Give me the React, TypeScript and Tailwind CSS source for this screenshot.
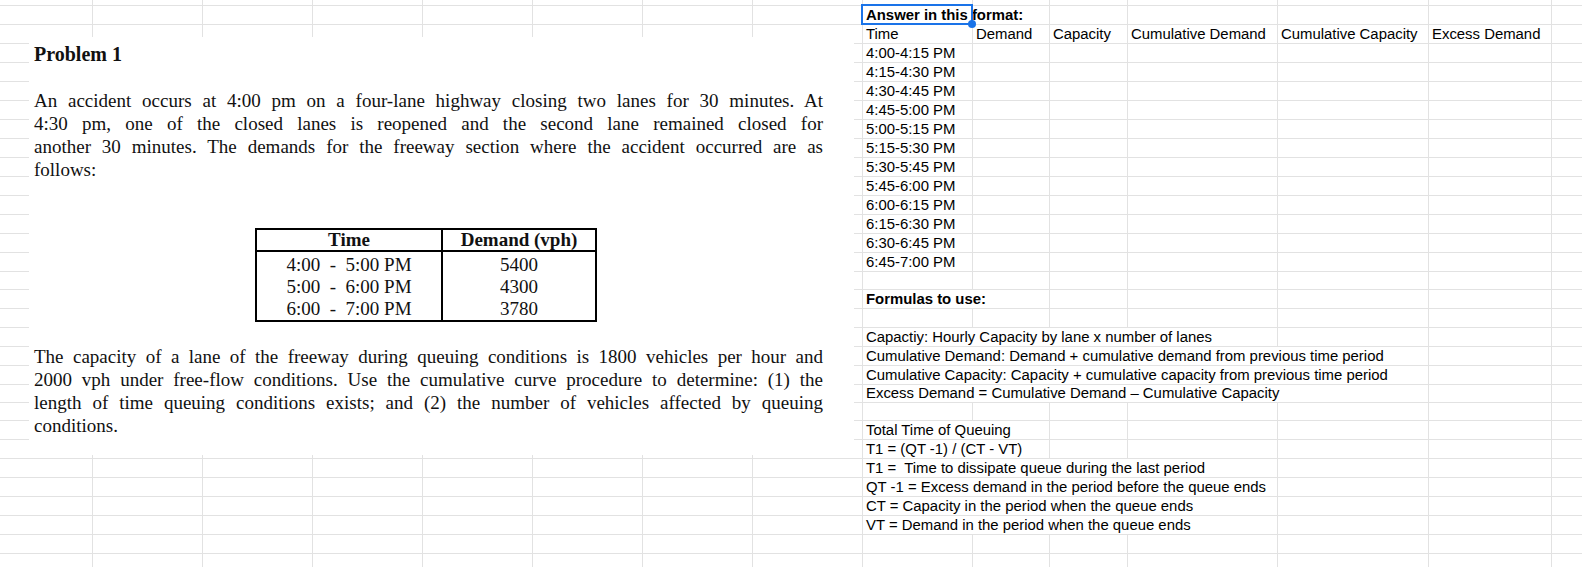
import React from "react";
import clsx from "clsx";

type Cell = { text: string; span?: 1 | 2 | 4 | 5; bold?: boolean };
type Row = Record<number, Cell>;

const NCOLS = 15;

const spanClass: Record<number, string> = {
  1: "",
  2: "col-span-2",
  4: "col-span-4",
  5: "col-span-5",
};

const times = [
  "4:00-4:15 PM",
  "4:15-4:30 PM",
  "4:30-4:45 PM",
  "4:45-5:00 PM",
  "5:00-5:15 PM",
  "5:15-5:30 PM",
  "5:30-5:45 PM",
  "5:45-6:00 PM",
  "6:00-6:15 PM",
  "6:15-6:30 PM",
  "6:30-6:45 PM",
  "6:45-7:00 PM",
];

const rows: Row[] = [
  {},
  { 8: { text: "Answer in this format:", bold: true, span: 2 } },
  {
    8: { text: "Time" },
    9: { text: "Demand" },
    10: { text: "Capacity" },
    11: { text: "Cumulative Demand" },
    12: { text: "Cumulative Capacity" },
    13: { text: "Excess Demand" },
  },
  ...times.map((t) => ({ 8: { text: t } })),
  {},
  { 8: { text: "Formulas to use:", bold: true, span: 2 } },
  {},
  { 8: { text: "Capactiy: Hourly Capacity by lane x number of lanes", span: 4 } },
  { 8: { text: "Cumulative Demand: Demand + cumulative demand from previous time period", span: 5 } },
  { 8: { text: "Cumulative Capacity: Capacity + cumulative capacity from previous time period", span: 5 } },
  { 8: { text: "Excess Demand = Cumulative Demand \u2013 Cumulative Capacity", span: 5 } },
  {},
  { 8: { text: "Total Time of Queuing", span: 2 } },
  { 8: { text: "T1 = (QT -1) / (CT - VT)", span: 2 } },
  { 8: { text: "T1 =  Time to dissipate queue during the last period", span: 4 } },
  { 8: { text: "QT -1 = Excess demand in the period before the queue ends", span: 4 } },
  { 8: { text: "CT = Capacity in the period when the queue ends", span: 4 } },
  { 8: { text: "VT = Demand in the period when the queue ends", span: 4 } },
  {},
  {},
];

function SheetRow({ row, idx }: { row: Row; idx: number }) {
  const cells: React.ReactNode[] = [];
  let c = 0;
  while (c < NCOLS) {
    const cell = row[c];
    const span = cell?.span ?? 1;
    cells.push(
      <div
        key={`${idx}-${c}`}
        className={clsx(
          "flex items-end whitespace-pre border-r border-b border-[#e2e2e2] pl-[3px] pb-px leading-none",
          spanClass[span],
          cell?.bold && "font-bold"
        )}
      >
        {cell?.text}
      </div>
    );
    c += span;
  }
  return <>{cells}</>;
}

function ProblemImage() {
  const justify = "text-justify [text-align-last:justify]";
  return (
    <div className="absolute left-[29px] top-[37px] w-[825px] h-[418px] bg-white pl-[5px] pt-[6px] font-['Liberation_Serif','Times_New_Roman',serif] text-[#111]">
      <div className="text-[20px] font-bold leading-[23px]">Problem 1</div>

      <div className="mt-[23px] w-[789px] text-[19px] leading-[23px]">
        <div className={justify}>
          An accident occurs at 4:00 pm on a four-lane highway closing two lanes for 30 minutes.  At
        </div>
        <div className={justify}>
          4:30 pm, one of the closed lanes is reopened and the second lane remained closed for
        </div>
        <div className={justify}>
          another 30 minutes.  The demands for the freeway section where the accident occurred are as
        </div>
        <div>follows:</div>
      </div>

      <div className="ml-[221px] mt-[47px] w-[342px] border-2 border-black text-[19px] text-center">
        <div className="grid grid-cols-[186px_1fr] border-b-2 border-black font-bold leading-[20px]">
          <div className="border-r-2 border-black">Time</div>
          <div>Demand (vph)</div>
        </div>
        <div className="grid grid-cols-[186px_1fr] leading-[22px]">
          <div className="border-r-2 border-black pt-[2px] whitespace-pre">
            <div>4:00  -  5:00 PM</div>
            <div>5:00  -  6:00 PM</div>
            <div>6:00  -  7:00 PM</div>
          </div>
          <div className="pt-[2px]">
            <div>5400</div>
            <div>4300</div>
            <div>3780</div>
          </div>
        </div>
      </div>

      <div className="mt-[23px] w-[789px] text-[19px] leading-[23px]">
        <div className={justify}>
          The capacity of a lane of the freeway during queuing conditions is 1800 vehicles per hour and
        </div>
        <div className={justify}>
          2000 vph under free-flow conditions.  Use the cumulative curve procedure to determine: (1) the
        </div>
        <div className={justify}>
          length of time queuing conditions exists; and (2) the number of vehicles affected by queuing
        </div>
        <div>conditions.</div>
      </div>
    </div>
  );
}

export default function App() {
  return (
    <div className="relative w-[1582px] h-[567px] overflow-hidden bg-white">
      {/* Sheet grid */}
      <div className="grid grid-cols-[93px_110px_110px_110px_110px_110px_110px_110px_110px_77px_78px_150px_151px_123px_110px] grid-rows-[6px_repeat(14,19px)_18px_repeat(5,19px)_18px_18px_repeat(8,19px)] font-['Liberation_Sans',Arial,sans-serif] text-[14.9px] text-black">
        {rows.map((row, i) => (
          <SheetRow key={i} row={row} idx={i} />
        ))}
      </div>

      {/* Selected cell */}
      <div className="absolute left-[861px] top-[4px] w-[112px] h-[21px] border-2 border-[#1a73e8]" />
      <div className="absolute left-[968px] top-[20px] w-2 h-2 rounded-full bg-[#1a73e8]" />

      {/* Pasted problem image */}
      <ProblemImage />
    </div>
  );
}
